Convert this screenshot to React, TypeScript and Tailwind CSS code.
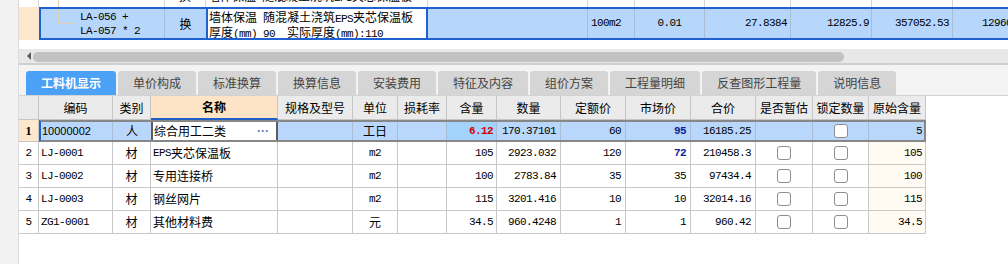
import React from "react";

const MONO = "font-['Liberation_Mono','Noto_Sans_CJK_SC',monospace] text-[11px] tracking-[-0.6px]";

function M({ children }: { children: React.ReactNode }) {
  return <span className={`${MONO} leading-none`}>{children}</span>;
}

const TABS = ["工料机显示", "单价构成", "标准换算", "换算信息", "安装费用", "特征及内容", "组价方案", "工程量明细", "反查图形工程量", "说明信息"];

const GRID =
  "grid grid-cols-[20px_74px_38px_127px_75px_45px_49px_50px_64px_65px_65px_65px_57px_56px_57px]";
const GRID1 =
  "grid grid-cols-[72px_38px_127px_75px_45px_49px_50px_64px_65px_65px_65px_57px_56px_55px]";

const C = "flex items-center border-r border-b border-[#c8c8c8] overflow-hidden whitespace-nowrap";
const C1 = "flex items-center border-r border-[#a9bcd6] overflow-hidden whitespace-nowrap";

function CB() {
  return <div className="w-[14px] h-[14px] border border-[#8e8e8e] rounded-[3px] bg-white" />;
}

function TopGrid() {
  const L = "shrink-0 border-r border-[#d6d6d6] h-full overflow-hidden";
  const S = "shrink-0 border-r border-[#a9bcd6] h-full flex items-center overflow-hidden whitespace-nowrap";
  return (
    <div className="h-[49px] bg-white overflow-hidden">
      <div className="h-[7px] flex overflow-hidden">
        <div className={`w-[20px] ${L}`} />
        <div className={`w-[126px] ${L}`}>
          <svg width="40" height="7" className="block">
            <path d="M19.5 0 V7" stroke="#e2cfb0" fill="none" />
          </svg>
        </div>
        <div className={`w-[41px] ${L} flex justify-center`}>
          <div className="-mt-[11px] leading-[14px]">换</div>
        </div>
        <div className={`w-[222px] ${L} pl-[2px]`}>
          <div className="-mt-[11px] leading-[14px] whitespace-nowrap">
            墙体保温<M> </M>随混凝土浇筑<M>EPS</M>夹芯保温板
          </div>
        </div>
        <div className={`w-[160px] ${L}`} />
        <div className={`w-[47px] ${L}`} />
        <div className={`w-[70px] ${L}`} />
        <div className={`w-[86px] ${L}`} />
        <div className={`w-[81px] ${L}`} />
        <div className={`w-[81px] ${L}`} />
        <div className="flex-1" />
      </div>
      <div className="h-[33px] flex">
        <div className="w-[20px] shrink-0 bg-[#fde7cd]" />
        <div className="flex-1 min-w-0 flex overflow-hidden border-l-2 border-y-2 border-[#1f62cf] bg-[#b7d6fb]">
          <div className="w-[124px] shrink-0 border-r border-[#a9bcd6] h-full flex overflow-hidden whitespace-nowrap">
            <svg width="39" height="29" className="block shrink-0">
              <path d="M17.5 0 V14.5 H35" stroke="#dccdb2" fill="none" />
            </svg>
            <div className={`h-full flex flex-col justify-center leading-[14px] ${MONO}`}>
              <div>LA-056 +</div>
              <div>LA-057 * 2</div>
            </div>
          </div>
          <div className="w-[41px] shrink-0 h-full flex items-center justify-center">换</div>
          <div className="w-[222px] shrink-0 h-full bg-white border-x-2 border-[#1f62cf] pl-[1px] whitespace-pre overflow-hidden">
            <div className="h-[15px] leading-[15px]">
              墙体保温<M> </M>随混凝土浇筑<M>EPS</M>夹芯保温板
            </div>
            <div className="h-[14px] leading-[15px]">
              厚度<M>(mm) 90  </M>实际厚度<M>(mm):110</M>
            </div>
          </div>
          <div className={`w-[160px] ${S}`} />
          <div className={`w-[47px] ${S} pl-[3px]`}>
            <M>100m2</M>
          </div>
          <div className={`w-[70px] ${S} justify-center`}>
            <M>0.01</M>
          </div>
          <div className={`w-[86px] ${S} justify-end pr-[3px]`}>
            <M>27.8384</M>
          </div>
          <div className={`w-[81px] ${S} justify-end pr-[2px]`}>
            <M>12825.9</M>
          </div>
          <div className={`w-[81px] ${S} justify-end pr-[3px]`}>
            <M>357052.53</M>
          </div>
          <div className={`w-[87px] ${S} justify-end pr-[3px]`}>
            <M>129600.00</M>
          </div>
        </div>
      </div>
    </div>
  );
}

function ScrollBar() {
  return (
    <div>
      <div className="h-[14px] bg-[#e8e8e8] flex items-stretch">
        <div className="w-[12px] shrink-0 flex items-center justify-end">
          <div className="w-0 h-0 border-y-[4px] border-y-transparent border-r-[4px] border-r-[#5a5a5a]" />
        </div>
        <div className="w-[811px] ml-[2px] mt-[3px] mb-[1px] rounded-full bg-[#c2c2c2]" />
      </div>
      <div className="h-[2px] bg-[#cfcfcf]" />
    </div>
  );
}

function Tabs() {
  return (
    <div className="h-[31px] bg-[#f3f3f3] border-b border-[#d2d2d2] pt-[6px] pl-[7px] flex gap-[2px]">
      {TABS.map((t, i) =>
        i === 0 ? (
          <div
            key={t}
            className="h-[24px] px-[15px] flex items-center rounded-t-[3px] bg-[#4aa1f6] text-white font-bold leading-[14px]"
          >
            {t}
          </div>
        ) : (
          <div
            key={t}
            className="h-[24px] px-[15px] flex items-center rounded-t-[3px] bg-[#d5d5d5] text-[#444444] leading-[14px]"
          >
            {t}
          </div>
        )
      )}
    </div>
  );
}

type Row = {
  n: string;
  code: string;
  name: React.ReactNode;
  unit: React.ReactNode;
  qty: string;
  amt: string;
  base: string;
  mkt: string;
  blue?: boolean;
  total: string;
  orig: string;
};

const ROWS: Row[] = [
  { n: "2", code: "LJ-0001", name: <><M>EPS</M>夹芯保温板</>, unit: <M>m2</M>, qty: "105", amt: "2923.032", base: "120", mkt: "72", blue: true, total: "210458.3", orig: "105" },
  { n: "3", code: "LJ-0002", name: "专用连接桥", unit: <M>m2</M>, qty: "100", amt: "2783.84", base: "35", mkt: "35", total: "97434.4", orig: "100" },
  { n: "4", code: "LJ-0003", name: "钢丝网片", unit: <M>m2</M>, qty: "115", amt: "3201.416", base: "10", mkt: "10", total: "32014.16", orig: "115" },
  { n: "5", code: "ZG1-0001", name: "其他材料费", unit: "元", qty: "34.5", amt: "960.4248", base: "1", mkt: "1", total: "960.42", orig: "34.5" },
];

function DataRow({ r }: { r: Row }) {
  return (
    <div className={`${GRID} h-[23px] w-[907px]`}>
      <div className={`${C} justify-center bg-white`}>
        <M>{r.n}</M>
      </div>
      <div className={`${C} pl-[2px]`}>
        <M>{r.code}</M>
      </div>
      <div className={`${C} justify-center`}>材</div>
      <div className={`${C} pl-[2px]`}>{r.name}</div>
      <div className={C} />
      <div className={`${C} justify-center`}>{r.unit}</div>
      <div className={C} />
      <div className={`${C} justify-end pr-[3px]`}>
        <M>{r.qty}</M>
      </div>
      <div className={`${C} justify-end pr-[4px]`}>
        <M>{r.amt}</M>
      </div>
      <div className={`${C} justify-end pr-[4px]`}>
        <M>{r.base}</M>
      </div>
      <div className={`${C} justify-end pr-[4px]`}>
        {r.blue ? (
          <span className={`${MONO} font-bold text-[#10239a]`}>{r.mkt}</span>
        ) : (
          <M>{r.mkt}</M>
        )}
      </div>
      <div className={`${C} justify-end pr-[4px]`}>
        <M>{r.total}</M>
      </div>
      <div className={`${C} justify-center`}>
        <CB />
      </div>
      <div className={`${C} justify-center`}>
        <CB />
      </div>
      <div className={`${C} justify-end pr-[3px] bg-[#fffaf2]`}>
        <M>{r.orig}</M>
      </div>
    </div>
  );
}

function Table() {
  const H = "flex items-center justify-center border-r border-b border-[#c6c6c6] bg-[#ebebeb] whitespace-nowrap";
  const heads = ["规格及型号", "单位", "损耗率", "含量", "数量", "定额价", "市场价", "合价", "是否暂估", "锁定数量", "原始含量"];
  return (
    <div className="flex flex-col">
      <div className={`${GRID} h-[24px] w-[907px]`}>
        <div className={H} />
        <div className={H}>编码</div>
        <div className={H}>类别</div>
        <div className="flex items-center justify-center border-r border-[#c6c6c6] border-b-2 border-b-[#1f5fc8] bg-[#fde4c6] font-bold">
          名称
        </div>
        {heads.map((h) => (
          <div key={h} className={H}>
            {h}
          </div>
        ))}
      </div>
      <div className="flex h-[22px] w-[907px]">
        <div className="w-[20px] shrink-0 bg-[#fde7cd] border-r border-b border-[#c8c8c8] flex items-center justify-center font-['Liberation_Serif',serif] font-bold text-[12px]">
          1
        </div>
        <div className="flex-1 border-2 border-[#878787] border-l-[#1f62cf] bg-[#b8d7fb]">
          <div className={`${GRID1} h-full`}>
            <div className={`${C1} pl-[1px] font-['Liberation_Sans',sans-serif] text-[11px]`}>10000002</div>
            <div className={`${C1} justify-center border-r-0`}>人</div>
            <div className="flex items-center justify-between bg-white border-x-2 border-[#5c5c5c] pl-[1px] pr-[7px] whitespace-nowrap">
              <span>综合用工二类</span>
              <span className="text-[#5b7fb5] font-['Liberation_Sans',sans-serif] text-[12px] font-bold">···</span>
            </div>
            <div className={C1} />
            <div className={`${C1} justify-center`}>工日</div>
            <div className={C1} />
            <div className={`${C1} justify-end pr-[3px] bg-[#a3d2fb]`}>
              <span className={`${MONO} font-bold text-[#d40000]`}>6.12</span>
            </div>
            <div className={`${C1} justify-end pr-[4px]`}>
              <M>170.37101</M>
            </div>
            <div className={`${C1} justify-end pr-[4px]`}>
              <M>60</M>
            </div>
            <div className={`${C1} justify-end pr-[4px]`}>
              <span className={`${MONO} font-bold text-[#10239a]`}>95</span>
            </div>
            <div className={`${C1} justify-end pr-[4px]`}>
              <M>16185.25</M>
            </div>
            <div className={C1} />
            <div className={`${C1} justify-center`}>
              <CB />
            </div>
            <div className="flex items-center justify-end pr-[2px]">
              <M>5</M>
            </div>
          </div>
        </div>
      </div>
      {ROWS.map((r) => (
        <DataRow key={r.n} r={r} />
      ))}
    </div>
  );
}

export default function App() {
  return (
    <div className="w-[1008px] h-[264px] overflow-hidden bg-white flex text-black font-['Noto_Sans_CJK_SC',sans-serif] text-[12px] leading-[14px]">
      <div className="w-[19px] shrink-0 bg-[#f2f2f2] border-r border-[#dcdcdc]" />
      <div className="flex-1 min-w-0 flex flex-col">
        <TopGrid />
        <ScrollBar />
        <Tabs />
        <Table />
      </div>
    </div>
  );
}
